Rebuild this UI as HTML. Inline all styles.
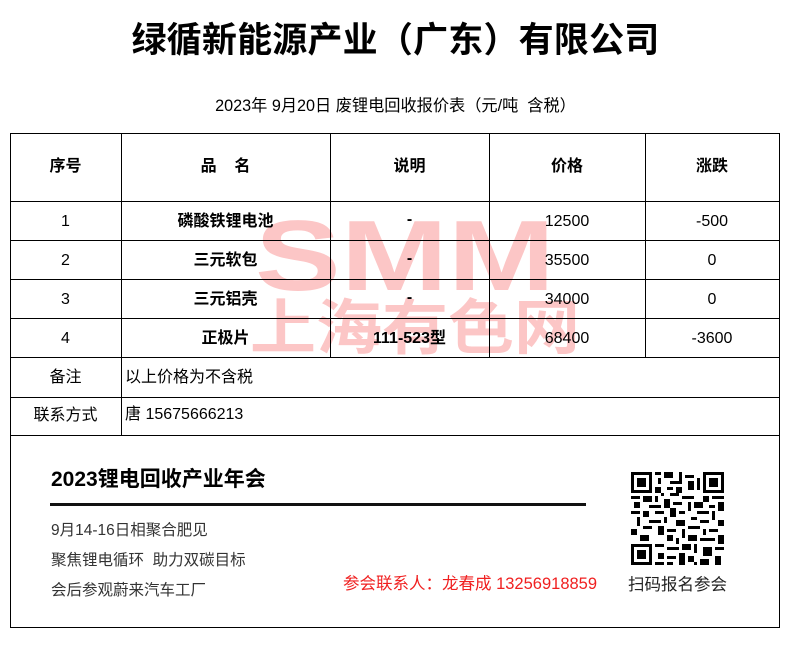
<!DOCTYPE html>
<html><head><meta charset="utf-8"><style>
body{margin:0;width:791px;height:647px;background:#fff;position:relative;overflow:hidden;font-family:"Liberation Sans","Noto Sans CJK SC",sans-serif;color:#000}
.a{position:absolute;white-space:nowrap}
.h{position:absolute;background:#000;height:1px}
.v{position:absolute;background:#000;width:1px}
.c{position:absolute;text-align:center;font-size:16px;line-height:20px}
.b{font-weight:bold}
</style></head><body>
<div class="a b" style="left:0;width:791px;text-align:center;top:18px;font-size:35px;line-height:46px;letter-spacing:0.2px">绿循新能源产业（广东）有限公司</div>
<div class="a" style="left:0;width:791px;text-align:center;top:96px;font-size:16.2px;line-height:20px">2023年 9月20日 废锂电回收报价表（元/吨&nbsp; 含税）</div>

<!-- watermark -->
<svg class="a" style="left:0;top:0" width="791" height="400">
<text x="255" y="290" font-family="Liberation Sans, sans-serif" font-weight="bold" font-size="100" fill="#fcc6c6" textLength="300" lengthAdjust="spacingAndGlyphs">SMM</text>
<text x="250" y="349" font-family="Noto Sans CJK SC, sans-serif" font-weight="bold" font-size="60" fill="#fcc6c6" textLength="330" lengthAdjust="spacingAndGlyphs">上海有色网</text>
</svg>

<!-- grid -->
<div class="h" style="left:10px;width:770px;top:133px"></div>
<div class="h" style="left:10px;width:770px;top:201px"></div>
<div class="h" style="left:10px;width:770px;top:240px"></div>
<div class="h" style="left:10px;width:770px;top:279px"></div>
<div class="h" style="left:10px;width:770px;top:318px"></div>
<div class="h" style="left:10px;width:770px;top:357px"></div>
<div class="h" style="left:10px;width:770px;top:397px"></div>
<div class="h" style="left:10px;width:770px;top:435px"></div>
<div class="h" style="left:10px;width:770px;top:627px"></div>
<div class="v" style="left:10px;top:133px;height:495px"></div>
<div class="v" style="left:779px;top:133px;height:495px"></div>
<div class="v" style="left:121px;top:133px;height:302px"></div>
<div class="v" style="left:330px;top:133px;height:224px"></div>
<div class="v" style="left:489px;top:133px;height:224px"></div>
<div class="v" style="left:645px;top:133px;height:224px"></div>

<!-- header -->
<div class="c b" style="left:10px;width:111px;top:157px">序号</div>
<div class="c b" style="left:121px;width:209px;top:157px">品&nbsp;&nbsp;&nbsp;&nbsp;名</div>
<div class="c b" style="left:330px;width:159px;top:157px">说明</div>
<div class="c b" style="left:489px;width:156px;top:157px">价格</div>
<div class="c b" style="left:645px;width:134px;top:157px">涨跌</div>

<div class="c" style="left:10px;width:111px;top:212px">1</div>
<div class="c b" style="left:121px;width:209px;top:212px">磷酸铁锂电池</div>
<div class="c b" style="left:330px;width:159px;top:210px">-</div>
<div class="c" style="left:489px;width:156px;top:212px">12500</div>
<div class="c" style="left:645px;width:134px;top:212px">-500</div>

<div class="c" style="left:10px;width:111px;top:251px">2</div>
<div class="c b" style="left:121px;width:209px;top:251px">三元软包</div>
<div class="c b" style="left:330px;width:159px;top:249px">-</div>
<div class="c" style="left:489px;width:156px;top:251px">35500</div>
<div class="c" style="left:645px;width:134px;top:251px">0</div>

<div class="c" style="left:10px;width:111px;top:290px">3</div>
<div class="c b" style="left:121px;width:209px;top:290px">三元铝壳</div>
<div class="c b" style="left:330px;width:159px;top:288px">-</div>
<div class="c" style="left:489px;width:156px;top:290px">34000</div>
<div class="c" style="left:645px;width:134px;top:290px">0</div>

<div class="c" style="left:10px;width:111px;top:329px">4</div>
<div class="c b" style="left:121px;width:209px;top:329px">正极片</div>
<div class="c b" style="left:330px;width:159px;top:329px">111-523型</div>
<div class="c" style="left:489px;width:156px;top:329px">68400</div>
<div class="c" style="left:645px;width:134px;top:329px">-3600</div>

<div class="c" style="left:10px;width:111px;top:368px">备注</div>
<div class="a" style="left:125px;top:368px;font-size:16px;line-height:20px">以上价格为不含税</div>
<div class="c" style="left:10px;width:111px;top:406px">联系方式</div>
<div class="a" style="left:125px;top:405px;font-size:16px;line-height:20px">唐 15675666213</div>

<!-- bottom -->
<div class="a b" style="left:51px;top:466px;font-size:21px;line-height:28px">2023锂电回收产业年会</div>
<div class="a" style="left:50px;top:503px;width:536px;height:3px;background:#111"></div>
<div class="a" style="left:51px;top:521px;font-size:15.5px;line-height:20px;color:#333">9月14-16日相聚合肥见</div>
<div class="a" style="left:51px;top:551px;font-size:15.5px;line-height:20px;color:#333">聚焦锂电循环&nbsp; 助力双碳目标</div>
<div class="a" style="left:51px;top:581px;font-size:15.5px;line-height:20px;color:#333">会后参观蔚来汽车工厂</div>
<div class="a" style="left:343px;top:574px;font-size:16.5px;line-height:20px;color:#f02020">参会联系人：龙春成 13256918859</div>
<div class="a" style="left:628px;top:575px;font-size:16.5px;line-height:20px;color:#222">扫码报名参会</div>

<svg class="a" style="left:631px;top:472px" width="93" height="93" viewBox="0 0 31 31" shape-rendering="crispEdges">
<g fill="#000">
<rect x="0" y="0" width="7" height="7"/><rect x="24" y="0" width="7" height="7"/><rect x="0" y="24" width="7" height="7"/>
</g>
<g fill="#fff"><rect x="1" y="1" width="5" height="5"/><rect x="25" y="1" width="5" height="5"/><rect x="1" y="25" width="5" height="5"/></g>
<g fill="#000"><rect x="2" y="2" width="3" height="3"/><rect x="26" y="2" width="3" height="3"/><rect x="2" y="26" width="3" height="3"/>
<path d="M8 0h2v1h-2zM11 0h3v2h-3zM16 0h1v3h-1zM18 1h3v1h-3zM9 2h1v2h-1zM13 3h4v1h-4zM19 3h2v3h-2zM8 5h2v2h-2zM12 5h2v1h-2zM15 5h2v2h-2zM22 2h1v4h-1zM10 7h1v1h-1zM13 7h3v1h-3zM0 8h3v1h-3zM4 8h3v2h-3zM8 8h1v2h-1zM17 8h4v1h-4zM24 8h2v2h-2zM27 8h4v1h-4zM1 10h2v2h-2zM6 11h4v1h-4zM11 9h2v3h-2zM14 10h3v1h-3zM19 10h1v3h-1zM21 10h3v2h-3zM26 11h2v1h-2zM29 10h2v3h-2zM0 13h3v1h-3zM4 13h2v2h-2zM8 13h3v1h-3zM13 12h2v3h-2zM16 13h2v1h-2zM22 13h4v1h-4zM27 13h1v3h-1zM2 15h1v3h-1zM6 16h4v1h-4zM11 15h1v2h-1zM15 16h3v2h-3zM20 15h2v1h-2zM23 16h3v1h-3zM29 16h2v2h-2zM0 19h2v2h-2zM4 18h3v1h-3zM9 18h2v3h-2zM12 19h3v1h-3zM17 19h1v3h-1zM19 18h4v1h-4zM24 19h1v2h-1zM26 19h3v1h-3zM3 21h3v2h-3zM12 21h2v2h-2zM15 22h1v2h-1zM19 21h3v2h-3zM23 22h5v1h-5zM29 21h2v3h-2zM8 24h3v1h-3zM12 25h4v1h-4zM17 24h3v2h-3zM21 24h1v3h-1zM24 25h3v3h-3zM28 25h3v1h-3zM9 27h2v2h-2zM12 28h3v1h-3zM16 27h2v4h-2zM19 28h2v2h-2zM23 29h3v2h-3zM28 28h2v3h-2zM8 30h3v1h-3zM12 30h2v1h-2zM21 30h1v1h-1z"/></g>
</svg>
</body></html>
